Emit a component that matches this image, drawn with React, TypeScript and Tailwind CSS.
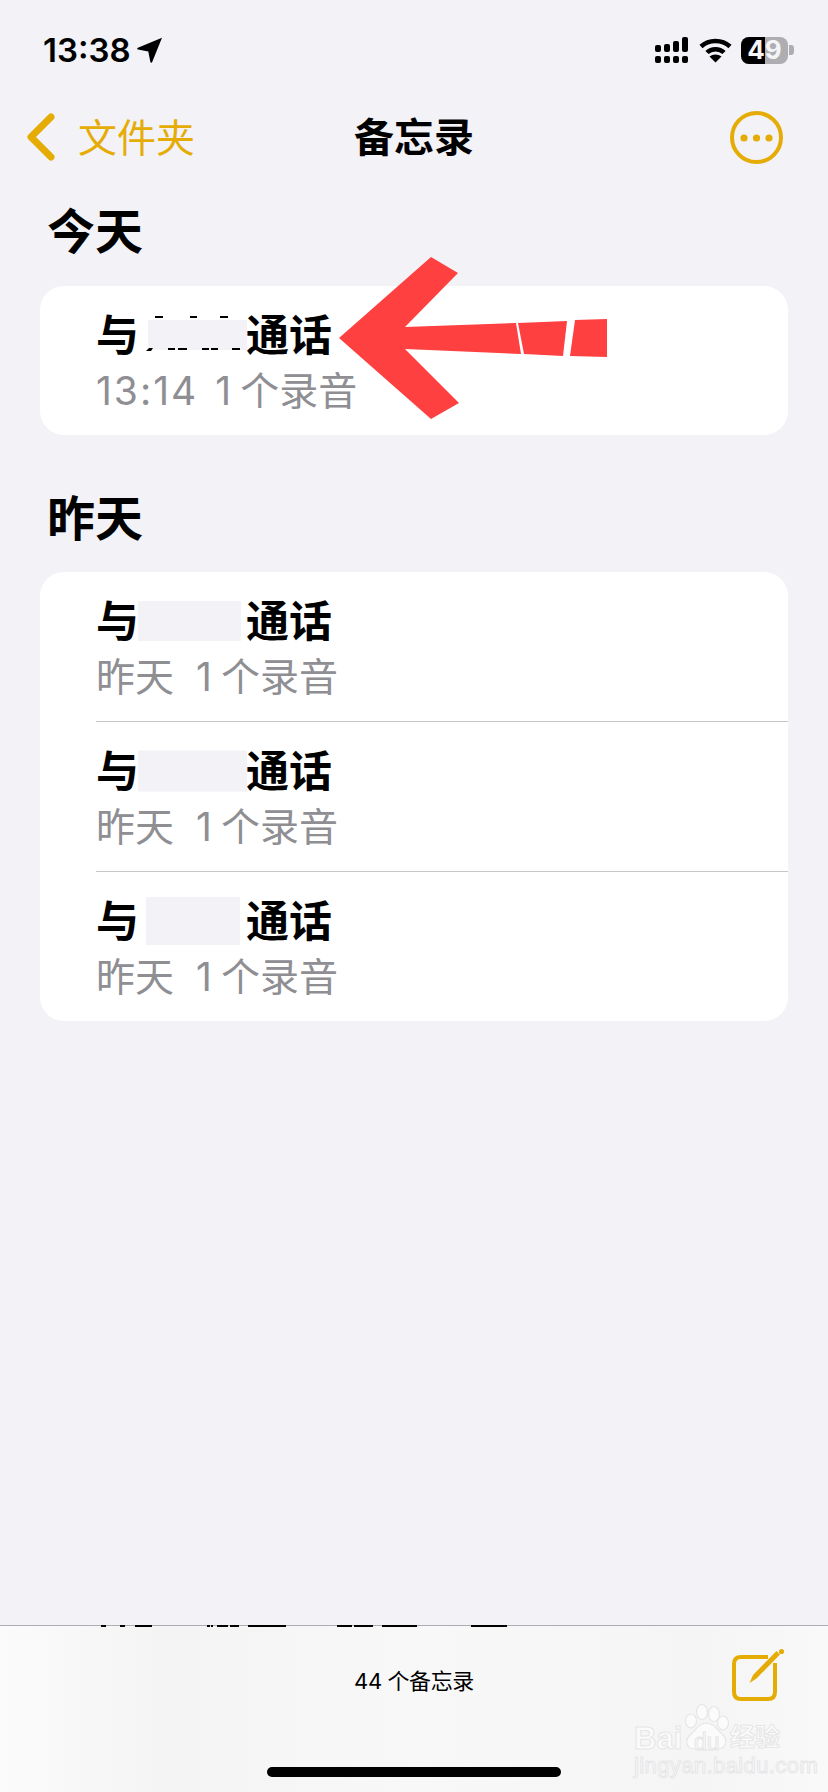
const cjk = "font-['Inter','Noto_Sans_CJK_SC',sans-serif]";

const StatusIcons = () => (
  <div className="flex items-center">
    <svg width="34" height="27" viewBox="0 0 34 27" fill="#000" className="mr-[10px]">
      <rect x="0" y="8" width="6" height="7" rx="2" />
      <rect x="9" y="7" width="6" height="8" rx="2" />
      <rect x="18" y="4" width="6" height="11" rx="2" />
      <rect x="27" y="0" width="6" height="15" rx="2" />
      <rect x="0" y="19" width="6" height="7" rx="2" />
      <rect x="9" y="19" width="6" height="7" rx="2" />
      <rect x="18" y="19" width="6" height="7" rx="2" />
      <rect x="27" y="19" width="6" height="7" rx="2" />
    </svg>
    <svg width="33" height="26" viewBox="0 0 33 26" fill="none" stroke="#000" strokeWidth="4.5" className="mr-[9px]">
      <path d="M2 9.5 C10 2 23 2 31 9.5" />
      <path d="M8 15.5 C12.5 11 20.5 11 25 15.5" />
      <path d="M16.5 25.5 L10.5 19.5 C14 16.8 19 16.8 22.5 19.5 Z" fill="#000" stroke="none" />
    </svg>
    <div className="relative w-[47px] h-[27px] rounded-[8px] bg-[#aeaeb2]">
      <div className="absolute left-0 top-0 bottom-0 w-[24px] rounded-l-[8px] bg-black" />
      <div className="absolute inset-0 flex items-center justify-center font-['Inter',sans-serif] text-[26px] font-bold leading-none text-[#f5f5f7]">
        49
      </div>
    </div>
    <div className="w-[5px] h-[10px] ml-[1px] rounded-r-[3px] bg-[#aeaeb2]" />
  </div>
);

const CallRow = ({
  time,
  maskLeft,
  maskWidth,
  maskHeight,
  divider,
  digits,
}: {
  time: string;
  maskLeft: number;
  maskWidth: number;
  maskHeight: number;
  divider?: boolean;
  digits?: boolean;
}) => (
  <div className="pl-[56px]">
    <div className={divider ? "h-[150px] pt-[24px] border-b border-[#c6c6c8]" : "h-[149px] pt-[24px]"}>
      <div className="relative flex items-center h-[50px] text-[43px] font-semibold leading-none text-black">
        <span>与</span>
        <span className="ml-[107px]">通话</span>
        <div
          className="absolute top-1/2 -translate-y-1/2 bg-[#f2f2f7]"
          style={{ left: maskLeft, width: maskWidth, height: maskHeight }}
        />
      </div>
      <div className="flex items-center h-[52px] mt-[4px] text-[39px] leading-none text-[#8e8e93]">
        <span className={digits ? "tracking-[2px]" : ""}>{time}</span>
        <span className={digits ? "ml-[17px]" : "ml-[22px]"}>1</span>
        <span className="ml-[9px]">个录音</span>
      </div>
    </div>
  </div>
);

// bits of the name that stick out from under the white-out on the first row
const NameResidue = () => (
  <svg width="110" height="40" viewBox="140 312 110 40" fill="#000" className="absolute left-[140px] top-[312px]">
    <rect x="155" y="316" width="8" height="2" />
    <rect x="190" y="316" width="7" height="2" />
    <rect x="220" y="316" width="8" height="2" />
    <polygon points="149,348 153,348 151,351 146,351" />
    <rect x="168" y="348" width="7" height="2" />
    <rect x="178" y="348" width="9" height="2" />
    <rect x="202" y="348" width="7" height="2" />
    <rect x="211" y="348" width="7" height="2" />
    <rect x="232" y="348" width="8" height="2" />
  </svg>
);

// tops of the list text that scrolled under the toolbar
const ScrolledText = () => (
  <svg width="420" height="2" viewBox="100 0 420 2" fill="#000" className="absolute left-[100px] top-[-1px]">
    <rect x="101" y="0" width="5" height="2" />
    <rect x="120" y="0" width="5" height="2" />
    <rect x="135" y="0" width="17" height="2" />
    <rect x="207" y="0" width="3" height="2" />
    <rect x="211" y="0" width="2" height="2" />
    <rect x="217" y="0" width="11" height="2" />
    <rect x="230" y="0" width="9" height="2" />
    <rect x="248" y="0" width="38" height="2" />
    <rect x="337" y="0" width="15" height="2" />
    <rect x="354" y="0" width="19" height="2" />
    <rect x="382" y="0" width="35" height="2" />
    <rect x="471" y="0" width="36" height="2" />
  </svg>
);

const Arrow = () => (
  <svg width="290" height="180" viewBox="330 250 290 180" fill="#ff4040" className="absolute left-[330px] top-[250px]">
    <polygon points="339,338 431,257 458,273 405,327 516,323 521,354 405,349 459,403 431,419" />
    <polygon points="518,323 567,321 563,356 524,354" />
    <polygon points="575,320 607,319 607,357 570,356" />
  </svg>
);

const Watermark = () => (
  <div className="absolute left-[634px] top-[1704px] w-[150px] h-[72px] text-[#fbfbfb] [-webkit-text-stroke:1px_#e6e6e7]">
    <svg width="52" height="50" viewBox="0 0 52 50" fill="#fbfbfb" stroke="#e6e6e7" strokeWidth="1.2" className="absolute left-[47px] top-0">
      <ellipse cx="10" cy="17" rx="5.5" ry="7" />
      <ellipse cx="21" cy="8" rx="5.5" ry="7.5" />
      <ellipse cx="33" cy="10" rx="5.5" ry="7.5" />
      <ellipse cx="42" cy="19" rx="5.5" ry="7" />
      <path d="M25 19 C33 19 37 26 41 30 C47 35 46 44 37 45 C30 46 20 46 13 45 C4 44 4 35 10 30 C15 26 18 19 25 19 Z" />
    </svg>
    <div className="absolute left-0 top-[19px] font-['Liberation_Sans',sans-serif] text-[31px] font-bold leading-none">Bai</div>
    <div className="absolute left-[60px] top-[27px] font-['Liberation_Sans',sans-serif] text-[23px] leading-none">du</div>
    <div className="absolute left-[96px] top-[19px] font-['Noto_Sans_CJK_SC',sans-serif] text-[25px] font-bold leading-none">经验</div>
    <div className="absolute left-0 top-[51px] font-['Liberation_Sans',sans-serif] text-[22px] leading-none whitespace-nowrap tracking-[0.4px]">jingyan.baidu.com</div>
  </div>
);

export default function App() {
  return (
    <div className={`relative flex flex-col w-[828px] h-[1792px] overflow-hidden bg-[#f2f2f7] ${cjk}`}>
      <div className="flex items-center justify-between h-[100px] pl-[43px] pr-[34px]">
        <div className="flex items-center">
          <span className="text-[33px] font-semibold leading-none text-black">13:38</span>
          <svg width="26" height="26" viewBox="0 0 26 26" fill="#000" className="ml-[6px]">
            <path d="M25 0.8 L15.2 25 C14.8 26 13.5 25.8 13.3 24.8 L11.3 14.6 L1 12.6 C0 12.4 -0.1 11.1 0.9 10.7 Z" />
          </svg>
        </div>
        <StatusIcons />
      </div>

      <div className="relative flex items-center justify-center h-[76px]">
        <div className="absolute left-[27px] top-0 bottom-[2px] flex items-center">
          <svg width="28" height="48" viewBox="0 0 28 48" fill="none" stroke="#e6ac06" strokeWidth="7" strokeLinecap="round" strokeLinejoin="round">
            <path d="M24 4 L4 24 L24 44" />
          </svg>
          <span className="ml-[23px] text-[39px] leading-none text-[#e6ac06]">文件夹</span>
        </div>
        <span className="text-[40px] font-semibold leading-none text-black">备忘录</span>
        <div className="absolute left-[730px] top-[11px]">
          <svg width="54" height="54" viewBox="0 0 54 54" fill="none">
            <circle cx="26.5" cy="26.5" r="24.5" stroke="#e6ac06" strokeWidth="4" />
            <circle cx="14" cy="27" r="3.6" fill="#e6ac06" />
            <circle cx="26.5" cy="27" r="3.6" fill="#e6ac06" />
            <circle cx="39" cy="27" r="3.6" fill="#e6ac06" />
          </svg>
        </div>
      </div>

      <div className="flex items-center h-[110px] pl-[47px] pt-[2px] text-[48px] font-bold leading-none text-black">今天</div>
      <div className="mx-[40px] rounded-[24px] bg-white overflow-hidden h-[149px]">
        <CallRow time="13:14" maskLeft={52} maskWidth={99} maskHeight={30} digits />
      </div>

      <div className="flex items-center h-[137px] pl-[47px] pt-[30px] text-[48px] font-bold leading-none text-black">昨天</div>
      <div className="mx-[40px] rounded-[24px] bg-white overflow-hidden">
        <CallRow time="昨天" maskLeft={42} maskWidth={103} maskHeight={40} divider />
        <CallRow time="昨天" maskLeft={42} maskWidth={109} maskHeight={41} divider />
        <CallRow time="昨天" maskLeft={50} maskWidth={94} maskHeight={48} />
      </div>

      <div className="relative mt-auto flex justify-center h-[167px] border-t border-[#aeaeb2] bg-[linear-gradient(90deg,#fbfbfb,#f4f4f5_20%,#f8f8f9_50%,#f5f5f6_85%,#f9f9f9)]">
        <span className="mt-[43px] h-[24px] text-[22px] leading-[24px] text-black tracking-[-0.4px]">44 个备忘录</span>
        <div className="absolute left-[267px] top-[141px] w-[294px] h-[10px] rounded-full bg-black" />
        <ScrolledText />
      </div>

      <svg width="56" height="56" viewBox="0 0 56 56" fill="none" className="absolute left-[730px] top-[1648px]">
        <path d="M38 9 H11 C6.5 9 4 11.5 4 16 V44 C4 48.5 6.5 51 11 51 H38 C42.5 51 45 48.5 45 44 V15" stroke="#e6ac06" strokeWidth="4" />
        <polygon points="19.5,35 23,27 46.5,3 50,6.5 26.5,30.5" fill="#e6ac06" />
        <circle cx="51.5" cy="3.5" r="2.6" fill="#e6ac06" />
      </svg>

      <NameResidue />
      <Arrow />
      <Watermark />
    </div>
  );
}
